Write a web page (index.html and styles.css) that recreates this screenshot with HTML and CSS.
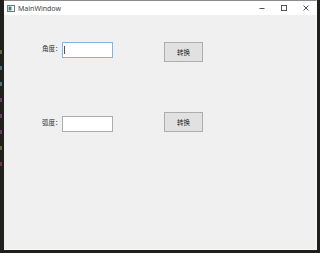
FILE: index.html
```html
<!DOCTYPE html>
<html>
<head>
	<meta charset="utf-8">
	<title>MainWindow</title>
	<link rel="stylesheet" href="styles.css">
</head>
<body>
	<div class="desk">
		<div class="editor-strip">
			<span class="dot green"></span>
			<span class="dot cyan"></span>
			<span class="dot cyan"></span>
			<span class="dot purple"></span>
			<span class="dot purple"></span>
			<span class="dot purple"></span>
			<span class="dot green"></span>
			<span class="dot red"></span>
		</div>
		<div class="window">
			<div class="titlebar">
				<svg class="app-icon" width="8" height="7" viewBox="0 0 8 7">
					<rect x="0.5" y="0.5" width="7" height="6" fill="#fff" stroke="#6c7a86"/>
					<rect x="1.5" y="1.5" width="3" height="4" fill="#3d8a6e"/>
				</svg>
				<span class="title">MainWindow</span>
				<div class="controls">
					<svg width="8" height="8" viewBox="0 0 8 8"><line x1="1.5" y1="4.5" x2="6.5" y2="4.5" stroke="#555"/></svg>
					<svg width="8" height="8" viewBox="0 0 8 8"><rect x="1.5" y="1.5" width="5" height="5" fill="none" stroke="#555"/></svg>
					<svg width="8" height="8" viewBox="0 0 8 8"><path d="M1.5 1.5 L6.5 6.5 M6.5 1.5 L1.5 6.5" stroke="#555"/></svg>
				</div>
			</div>
			<div class="content">
				<div class="row row-angle">
					<label class="field-label" for="angle">角度：</label>
					<input class="field-input focused" id="angle" type="text">
					<button class="convert">转换</button>
				</div>
				<div class="row row-radian">
					<label class="field-label" for="radian">弧度：</label>
					<input class="field-input" id="radian" type="text">
					<button class="convert">转换</button>
				</div>
			</div>
		</div>
	</div>
</body>
</html>
```

FILE: styles.css
```css
html, body {
	margin: 0;
	padding: 0;
}
body {
	width: 320px;
	height: 253px;
	overflow: hidden;
	background-color: #1f1f1c;
	font-family: "Noto Sans CJK SC", "Liberation Sans", sans-serif;
}
.desk {
	display: flex;
	height: 250px;
}
.editor-strip {
	width: 4px;
	display: flex;
	flex-direction: column;
	gap: 12px;
	padding-top: 50px;
	box-sizing: border-box;
}
.dot {
	display: block;
	width: 2px;
	height: 4px;
	opacity: 0.7;
}
.green { background-color: #6a9a3a; }
.cyan { background-color: #4a9ab0; }
.purple { background-color: #8a4a8a; }
.red { background-color: #a03a4a; }
.window {
	width: 313px;
	display: flex;
	flex-direction: column;
	background-color: #f0f0f0;
	border-top: 1px solid #8c8c8c;
	border-right: 1px solid #fafafa;
	border-bottom: 1px solid #fafafa;
	box-sizing: border-box;
}
.titlebar {
	height: 14px;
	background-color: #ffffff;
	display: flex;
	align-items: center;
	padding-left: 3px;
	box-sizing: border-box;
}
.app-icon {
	margin-right: 3px;
}
.title {
	font-family: "Noto Sans", "Liberation Sans", sans-serif;
	font-size: 7px;
	color: #444;
}
.controls {
	margin-left: auto;
	display: flex;
	gap: 14px;
	margin-right: 6px;
}
.content {
	flex: 1;
	padding-top: 27px;
}
.row {
	display: flex;
	align-items: flex-start;
	padding-left: 38px;
}
.row-radian {
	margin-top: 50px;
}
.field-label {
	width: 20px;
	font-size: 6.5px;
	line-height: 8px;
	color: #333;
	margin-top: 2px;
}
.row-radian .field-label {
	margin-top: 6px;
}
.field-input {
	width: 51px;
	height: 16px;
	margin: 0;
	padding: 0;
	box-sizing: border-box;
	border: 1px solid #adadad;
	background-color: #fff;
	outline: none;
}
.row-radian .field-input {
	margin-top: 4px;
}
.field-input.focused {
	border-color: #7eb4ea;
	background-image: linear-gradient(#555, #555);
	background-size: 1px 8px;
	background-position: 1px 3px;
	background-repeat: no-repeat;
}
.convert {
	margin-left: 51px;
	width: 39px;
	height: 20px;
	padding: 0;
	box-sizing: border-box;
	border: 1px solid #adadad;
	background-color: #e1e1e1;
	font-family: "Noto Sans CJK SC", sans-serif;
	font-size: 6.5px;
	color: #222;
}
```
